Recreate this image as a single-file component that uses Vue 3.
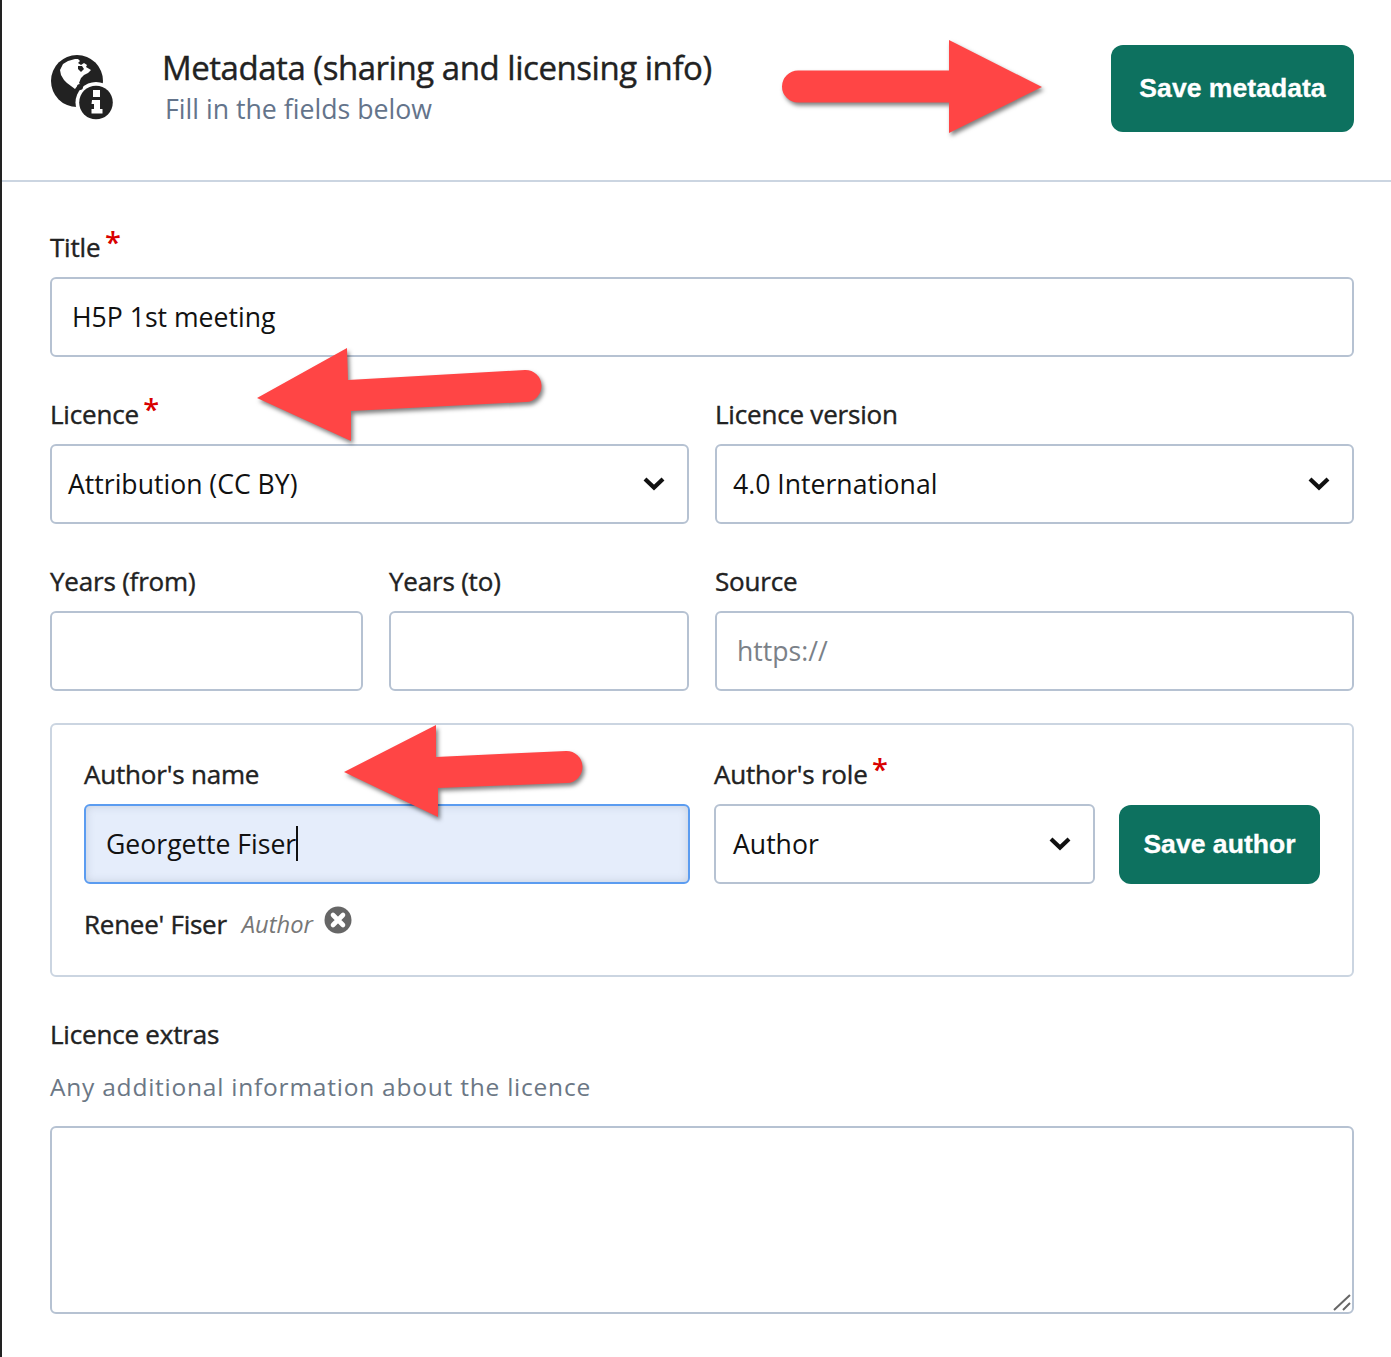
<script setup>
const required = "*";
</script>

<template>
  <div class="page">
    <header class="head">
      <svg class="globe" width="64" height="66" viewBox="0 0 64 66">
        <circle cx="26" cy="27" r="26" fill="#222" />
        <path d="M9 16 L12 10 L17 7 L24 5 L27 5 L29 7 L27 9 L30 11 L33 9 L36 11 L35 13 L40 16 L37 19 L33 21 L30 24 L28 29 L30 31 L27 31 L24 35 L20 32 L16 29 L13 26 L10 21 Z" fill="#fff" />
        <path d="M27 12 L31 12 L33 15 L30 18 L27 15 Z" fill="#222" />
        <circle cx="45" cy="48.5" r="20.5" fill="#fff" />
        <circle cx="29" cy="33" r="3" fill="#222" />
        <circle cx="45" cy="48.5" r="16.8" fill="#222" />
        <path d="M42 36 h7 v7 h-7 Z M41 46 h8 v9 h2.5 v4.5 h-11 v-4.5 h2.5 v-5 h-2.5 Z" fill="#fff" />
      </svg>
      <div class="head-text">
        <h1>Metadata (sharing and licensing info)</h1>
        <p>Fill in the fields below</p>
      </div>
      <button class="btn btn-meta">Save metadata</button>
    </header>

    <form class="form">
      <div class="field">
        <label>Title <span class="req">{{ required }}</span></label>
        <input class="ctl" value="H5P 1st meeting" />
      </div>

      <div class="cols">
        <div class="field">
          <label>Licence <span class="req">{{ required }}</span></label>
          <div class="select">
            <span>Attribution (CC BY)</span>
            <svg width="24" height="16" viewBox="0 0 24 16"><path d="M3 3 L12 11.5 L21 3" fill="none" stroke="#111" stroke-width="4.2" /></svg>
          </div>
        </div>
        <div class="field">
          <label>Licence version</label>
          <div class="select">
            <span>4.0 International</span>
            <svg width="24" height="16" viewBox="0 0 24 16"><path d="M3 3 L12 11.5 L21 3" fill="none" stroke="#111" stroke-width="4.2" /></svg>
          </div>
        </div>
      </div>

      <div class="cols">
        <div class="years">
          <div class="field">
            <label>Years (from)</label>
            <input class="ctl" />
          </div>
          <div class="field">
            <label>Years (to)</label>
            <input class="ctl" />
          </div>
        </div>
        <div class="field">
          <label>Source</label>
          <input class="ctl" placeholder="https://" />
        </div>
      </div>

      <section class="authors">
        <div class="author-row">
          <div class="field">
            <label>Author's name</label>
            <div class="focused">
              <span class="typed">Georgette Fiser</span>
            </div>
          </div>
          <div class="field">
            <label>Author's role <span class="req">{{ required }}</span></label>
            <div class="select select-role">
              <span>Author</span>
              <svg width="24" height="16" viewBox="0 0 24 16"><path d="M3 3 L12 11.5 L21 3" fill="none" stroke="#111" stroke-width="4.2" /></svg>
            </div>
          </div>
          <button type="button" class="btn btn-author">Save author</button>
        </div>
        <div class="added">
          <strong>Renee' Fiser</strong>
          <em>Author</em>
          <svg width="28" height="28" viewBox="0 0 28 28">
            <circle cx="14" cy="14" r="13.5" fill="#666" />
            <path d="M9 9 L19 19 M19 9 L9 19" stroke="#fff" stroke-width="4.6" stroke-linecap="round" />
          </svg>
        </div>
      </section>

      <div class="extras">
        <label>Licence extras</label>
        <p>Any additional information about the licence</p>
        <div class="area-wrap">
          <textarea class="area"></textarea>
          <svg class="grip" width="20" height="18" viewBox="0 0 20 18">
            <path d="M2 17 L18 2 M11 17 L18 10" fill="none" stroke="#666" stroke-width="2" />
          </svg>
        </div>
      </div>
    </form>

    <svg class="arrows" width="1391" height="1357" viewBox="0 0 1391 1357">
      <g fill="#ff4545">
        <path d="M798 70.5 H949 V40 L1042 87 L949 133 V102.5 H798 A16 16 0 0 1 798 70.5 Z" />
        <path d="M257 398 L347 348 L348 380 L525 370 A16 16 0 0 1 526 402 L351 411 L351 441 Z" />
        <path d="M344 772 L436 725 L436 757 L566 751 A16 16 0 0 1 567 783 L438 788 L438 817 Z" />
      </g>
    </svg>
  </div>
</template>

<style scoped>
.page {
  position: relative;
  width: 1389px;
  height: 1357px;
  border-left: 2px solid #222;
  background: #fff;
  font-family: "Open Sans", sans-serif;
  color: #222;
  overflow: hidden;
}
.head {
  display: flex;
  align-items: center;
  height: 180px;
  padding: 0 37px 0 49px;
  border-bottom: 2px solid #cbd5e1;
}
.globe {
  margin-top: -6px;
  flex: none;
}
.head-text {
  margin-left: 47px;
  flex: 1;
  margin-top: -7px;
}
h1 {
  margin: 0;
  font-size: 33px;
  line-height: 44px;
  font-weight: 400;
  letter-spacing: -0.46px;
  -webkit-text-stroke: 0.4px #222;
}
.head-text p {
  margin: 1px 0 0 3px;
  font-size: 26.7px;
  line-height: 36px;
  color: #64748b;
}
.btn {
  border: none;
  border-radius: 12px;
  background: #0d715f;
  color: #fff;
  font-family: "Liberation Sans", Arial, sans-serif;
  font-weight: 700;
  font-size: 26.6px;
  -webkit-text-stroke: 0.3px #fff;
}
.btn-meta {
  width: 243px;
  height: 87px;
  margin-top: -3px;
}
.form {
  padding: 44px 37px 0 48px;
  display: flex;
  flex-direction: column;
  gap: 36px;
}
.field {
  display: flex;
  flex-direction: column;
  min-width: 0;
}
label {
  display: block;
  height: 40px;
  font-size: 26px;
  line-height: 42px;
  letter-spacing: -0.2px;
  color: #222;
  -webkit-text-stroke: 0.4px #222;
}
.field label {
  margin-bottom: 11px;
}
.req {
  position: relative;
  top: -4px;
  margin-left: -2px;
  line-height: 0;
  color: #d90000;
  font-size: 29px;
  font-weight: 600;
  -webkit-text-stroke: 0;
}
.ctl,
.select,
.focused {
  box-sizing: border-box;
  width: 100%;
  height: 80px;
  border: 2px solid #b6c2d2;
  border-radius: 6px;
  background: #fff;
  font-family: "Open Sans", sans-serif;
  font-size: 26.6px;
  color: #111;
}
.ctl {
  padding: 0 20px;
  outline: none;
}
.ctl::placeholder {
  color: #7b8188;
  opacity: 1;
}
.select {
  display: flex;
  align-items: center;
  justify-content: space-between;
  padding: 0 21px 0 16px;
}
.select-role {
  padding-left: 17px;
}
.focused {
  display: flex;
  align-items: center;
  padding: 0 20px;
  border-color: #5b9cf0;
  background: #e5edfb;
  box-shadow: inset 0 0 8px rgba(100, 116, 139, 0.25);
}
.typed {
  position: relative;
  line-height: 36px;
}
.typed::after {
  content: "";
  position: absolute;
  right: -2px;
  top: 0;
  width: 2px;
  height: 35px;
  background: #111;
}
.cols {
  display: grid;
  grid-template-columns: 639px 639px;
  gap: 26px;
}
.years {
  display: grid;
  grid-template-columns: 313px 300px;
  gap: 26px;
}
.authors {
  box-sizing: border-box;
  height: 254px;
  margin-top: -4px;
  padding: 28px 32px 0;
  border: 2px solid #cbd5e1;
  border-radius: 6px;
}
.author-row {
  display: grid;
  grid-template-columns: 606px 381px 201px;
  gap: 24px;
  align-items: end;
}
.btn-author {
  height: 79px;
}
.added {
  display: flex;
  align-items: center;
  margin-top: 22px;
  height: 36px;
}
.added strong {
  font-size: 26px;
  font-weight: 400;
  letter-spacing: -0.25px;
  -webkit-text-stroke: 0.4px #222;
}
.added em {
  margin-left: 15px;
  font-size: 23.7px;
  color: #777;
}
.added svg {
  margin: -8px 0 0 11px;
}
.extras {
  margin-top: 0;
}
.extras p {
  margin: 17px 0 22px;
  font-size: 24.5px;
  line-height: 34px;
  letter-spacing: 0.77px;
  color: #6b7785;
}
.area-wrap {
  position: relative;
}
.area {
  display: block;
  box-sizing: border-box;
  width: 1304px;
  height: 188px;
  border: 2px solid #b6c2d2;
  border-radius: 6px;
  outline: none;
  resize: none;
}
.grip {
  position: absolute;
  right: 2px;
  bottom: 3px;
}
.arrows {
  position: absolute;
  left: -2px;
  top: 0;
  pointer-events: none;
  filter: drop-shadow(2px 3px 2px rgba(0, 0, 0, 0.5));
}
</style>
